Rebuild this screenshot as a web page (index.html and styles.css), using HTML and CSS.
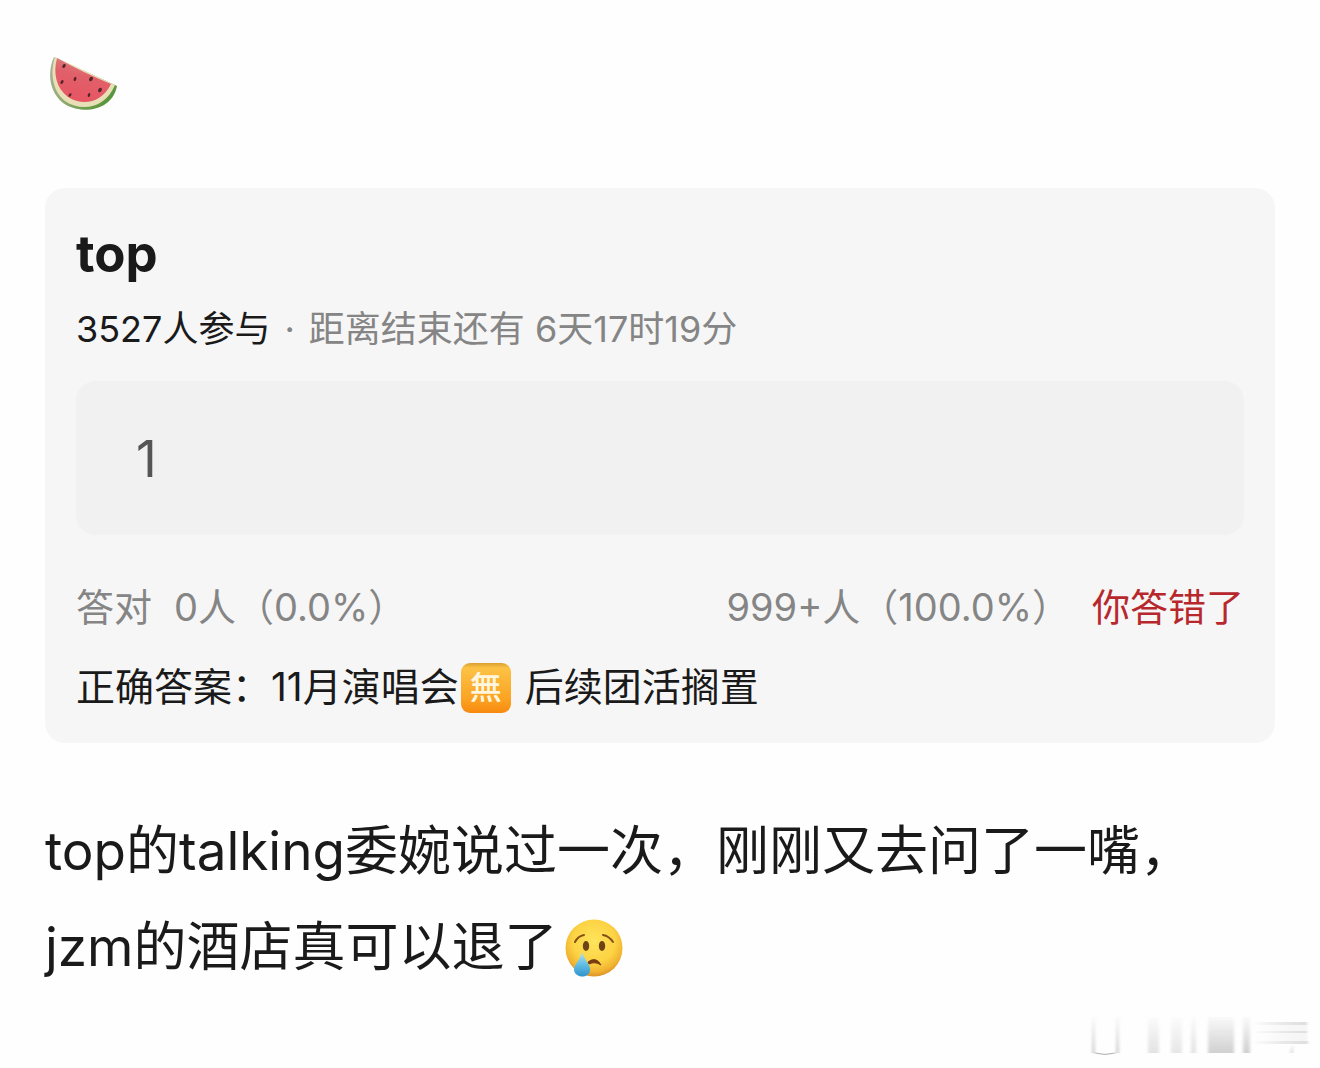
FILE: index.html
```html
<!DOCTYPE html>
<html lang="zh-CN">
<head>
<meta charset="utf-8">
<meta name="viewport" content="width=device-width, initial-scale=1">
<title>top</title>
<link rel="stylesheet" href="styles.css">
</head>
<body>
<main class="post">
  <svg class="melon" viewBox="0 0 72 60" role="img" aria-label="西瓜">
    <defs>
      <linearGradient id="flesh" x1="0.6" y1="0" x2="0.3" y2="1">
        <stop offset="0" stop-color="#d98484"/><stop offset="0.4" stop-color="#e0606a"/><stop offset="1" stop-color="#e85462"/>
      </linearGradient>
      <linearGradient id="rind" x1="0" y1="0" x2="1" y2="0.6">
        <stop offset="0" stop-color="#a9b39b"/><stop offset="0.5" stop-color="#93ab74"/><stop offset="1" stop-color="#57963b"/>
      </linearGradient>
    </defs>
    <path d="M7 3C0 18 2 38 16 49C33 61 65 58 70 32L68 31Z" fill="url(#rind)"/>
    <path d="M8 3C3 18 5 37 18 47C34 58 58 55 68 31Z" fill="#e9dfb6"/>
    <path d="M10 4C6 19 9 34 21 43C35 52 54 50 64 30Q35 18 10 4Z" fill="url(#flesh)"/>
    <g fill="#54242a">
      <ellipse cx="17" cy="12" rx="1.5" ry="2.2" transform="rotate(30 17 12)"/>
      <ellipse cx="28" cy="25" rx="1.3" ry="2.2" transform="rotate(20 28 25)"/>
      <ellipse cx="15" cy="28" rx="1.3" ry="2.1" transform="rotate(35 15 28)"/>
      <ellipse cx="44" cy="25" rx="1.7" ry="2.4" transform="rotate(35 44 25)"/>
      <ellipse cx="53" cy="36" rx="1.7" ry="2.3" transform="rotate(35 53 36)"/>
      <ellipse cx="23" cy="41" rx="1.2" ry="2" transform="rotate(35 23 41)"/>
      <ellipse cx="42" cy="41" rx="1.2" ry="2" transform="rotate(20 42 41)"/>
    </g>
  </svg>

  <section class="quiz">
    <h1 class="quiz-title"><label for="answer">top</label></h1>
    <p class="quiz-meta"><span class="joined">3527人参与</span><span>·</span><span>距离结束还有 6天17时19分</span></p>
    <input class="quiz-input" id="answer" type="text" value="1" readonly>
    <div class="quiz-stats">
      <span>答对</span>
      <span>0人（0.0%）</span>
      <span class="wrong-count">999+人（100.0%）</span>
      <span class="verdict">你答错了</span>
    </div>
    <p class="quiz-answer">正确答案：11月演唱会<span class="badge">無</span>后续团活搁置</p>
  </section>

  <p class="post-text">top的talking委婉说过一次，刚刚又去问了一嘴，<br>jzm的酒店真可以退了<svg class="cry" viewBox="0 0 60 60" role="img" aria-label="哭">
      <defs>
        <radialGradient id="face" cx="0.5" cy="0.38" r="0.62">
          <stop offset="0" stop-color="#ffe45c"/><stop offset="0.6" stop-color="#fcd344"/><stop offset="0.86" stop-color="#f1b431"/><stop offset="1" stop-color="#dc922b"/>
        </radialGradient>
        <linearGradient id="tear" x1="0" y1="0" x2="0" y2="1">
          <stop offset="0" stop-color="#b7e3ee"/><stop offset="0.5" stop-color="#63bfe5"/><stop offset="1" stop-color="#2f92cc"/>
        </linearGradient>
      </defs>
      <circle cx="30" cy="30" r="28.5" fill="url(#face)"/>
      <g fill="none" stroke="#835019" stroke-width="2" stroke-linecap="round">
        <path d="M11 24Q14 18 20 17"/>
        <path d="M39 17Q45 18 49 24"/>
      </g>
      <path d="M24 44Q32 38 37 47Q31 43 25 46Z" fill="#7a3b12" stroke="#7a3b12" stroke-linejoin="round"/>
      <ellipse cx="22" cy="28" rx="3.2" ry="5" fill="#6f4316"/>
      <ellipse cx="38" cy="28" rx="3.2" ry="5" fill="#6f4316"/>
      <path d="M18 34C21 43 27 47 26 53C24 61 11 60 10 52C10 46 16 43 18 34Z" fill="url(#tear)"/>
    </svg></p>

  <svg class="watermark" viewBox="0 0 230 44" aria-hidden="true">
    <defs>
      <linearGradient id="fade" x1="0" y1="0" x2="0" y2="1">
        <stop offset="0" stop-color="#d0d0d0" stop-opacity="0.1"/><stop offset="1" stop-color="#d0d0d0"/>
      </linearGradient>
      <linearGradient id="fadeSide" x1="0" y1="0" x2="1" y2="0">
        <stop offset="0" stop-color="#ddd" stop-opacity="0"/><stop offset="1" stop-color="#ddd"/>
      </linearGradient>
      <filter id="soft" x="-10%" y="-10%" width="120%" height="120%"><feGaussianBlur stdDeviation="1.4 0.6"/></filter>
    </defs>
    <g filter="url(#soft)">
      <g fill="url(#fade)">
        <path d="M2 2H5V38H2Z"/><path d="M26 2H29V38H26Z"/>
        <path d="M58 2H69V38H58Z" opacity="0.6"/><path d="M81 2H92V38H81Z" opacity="0.5"/>
        <path d="M101 2H106V38H101Z" opacity="0.6"/><path d="M118 2H144V38H118Z"/>
        <path d="M153 2H160V38H153Z"/>
      </g>
      <path d="M5 38Q15 41 25 38" fill="none" stroke="#aaa"/>
      <path d="M162 7H217V29H162Z" fill="url(#fadeSide)" opacity="0.3"/>
      <g fill="url(#fadeSide)">
        <path d="M162 7H217V10H162Z"/><path d="M162 16H217V18H162Z"/><path d="M162 26H218V29H162Z"/>
      </g>
      <path d="M200 38L203 29V38Z" fill="#ddd"/>
    </g>
  </svg>
</main>
</body>
</html>
```
FILE: styles.css
```css
* {
  box-sizing: border-box;
}

body {
  margin: 0;
  background: #fefefe;
  color: #1a1a1a;
  font-family: Inter, "Noto Sans CJK SC", sans-serif;
}

p,
h1 {
  margin: 0;
}

.post {
  display: flex;
  flex-direction: column;
  padding: 54px 45px 12px;
}

.melon {
  width: 72px;
  height: 60px;
  margin-left: 2px;
}

.quiz {
  display: flex;
  flex-direction: column;
  margin-top: 74px;
  padding: 29px 31px 16px;
  border-radius: 20px;
  background: #f6f6f6;
}

.quiz-title {
  font-size: 51px;
  font-weight: 700;
  line-height: 74px;
}

.quiz-meta {
  display: flex;
  gap: 14px;
  color: #858585;
  font-size: 36px;
  line-height: 76px;
}

.joined {
  color: #1a1a1a;
}

.quiz-input {
  width: 100%;
  height: 154px;
  margin-top: 14px;
  padding: 0 60px;
  border: 0;
  border-radius: 20px;
  outline: 0;
  background: #f1f1f1;
  color: #555;
  font: inherit;
  font-size: 51px;
}

.quiz-stats {
  display: flex;
  gap: 22px;
  margin-top: 32px;
  color: #858585;
  font-size: 38px;
  line-height: 80px;
}

.wrong-count {
  margin-left: auto;
}

.verdict {
  color: #b7282d;
}

.quiz-answer {
  font-size: 39px;
  line-height: 80px;
}

.badge {
  display: inline-block;
  width: 50px;
  margin: 0 14px 0 2px;
  border-radius: 9px;
  background: linear-gradient(#d9a030, #fcc246 10%, #fca423 70%, #f88a10);
  color: #fff6df;
  font-size: 32px;
  font-weight: 500;
  line-height: 50px;
  text-align: center;
  vertical-align: 2px;
}

.post-text {
  margin-top: 60px;
  font-size: 53px;
  line-height: 96px;
}

.cry {
  width: 60px;
  height: 60px;
  margin-left: 6px;
  vertical-align: -12px;
}

.watermark {
  align-self: flex-end;
  width: 230px;
  height: 44px;
  margin: 20px -45px 0 0;
}
```
